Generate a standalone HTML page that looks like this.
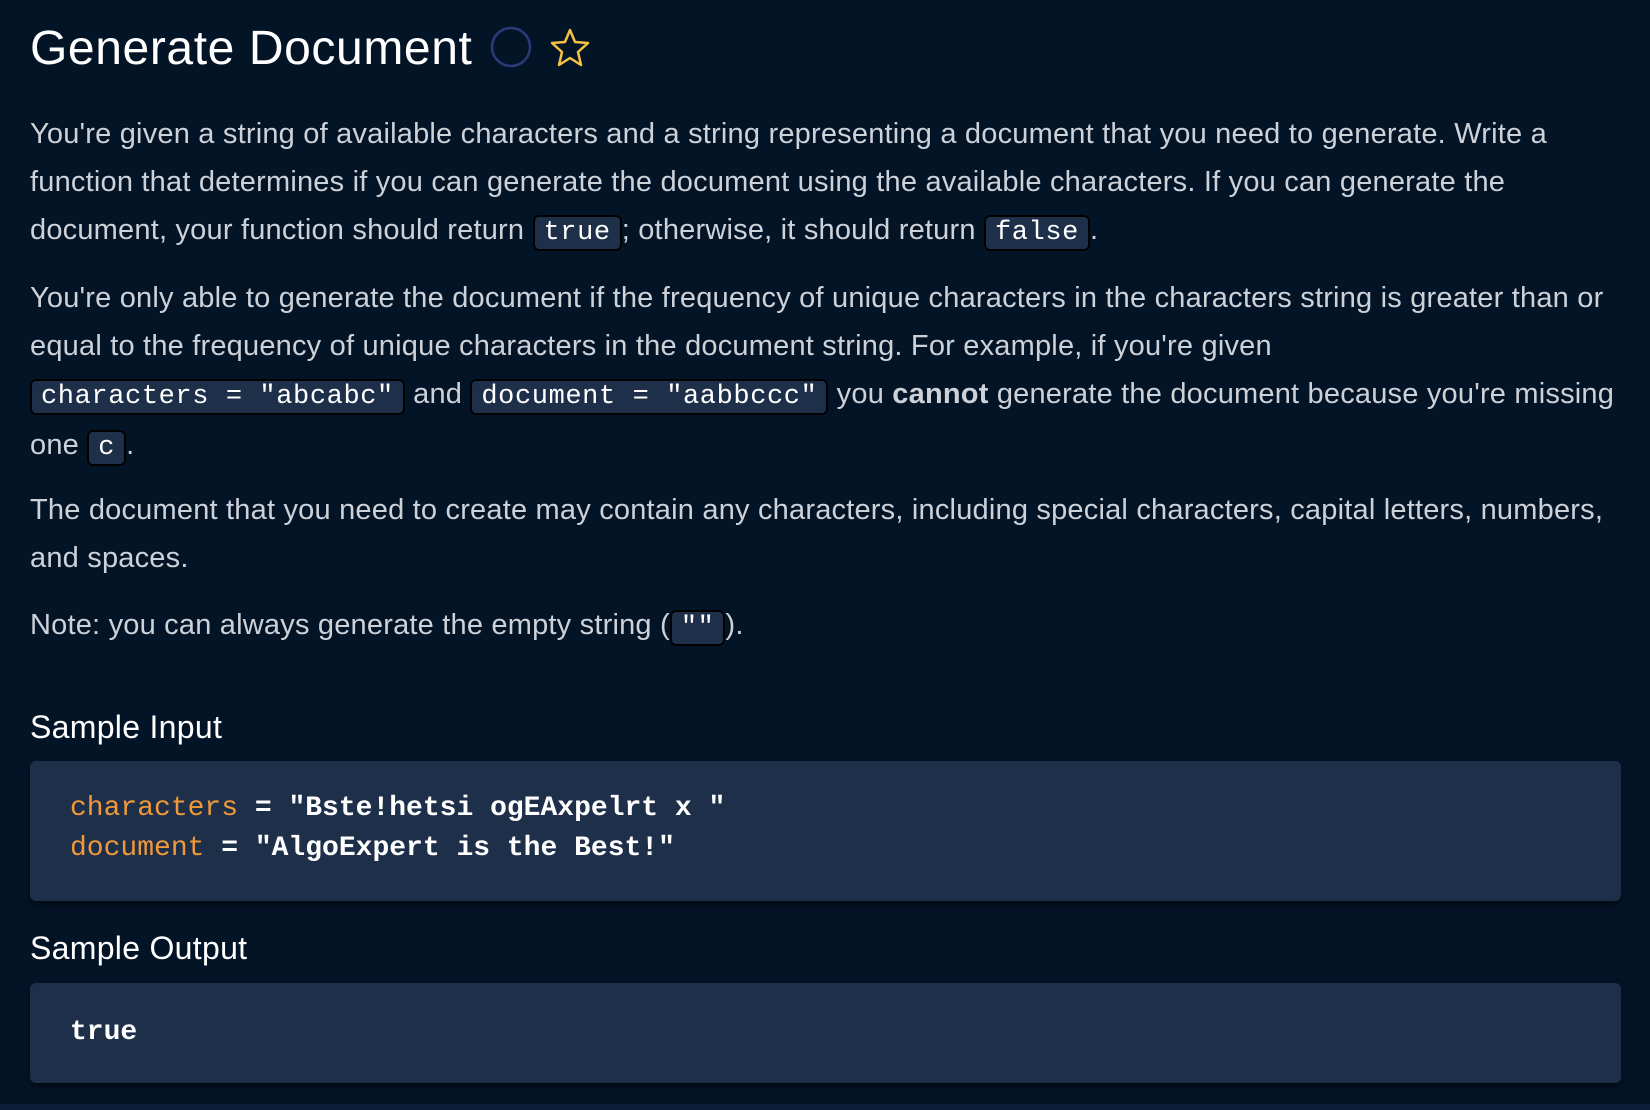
<!DOCTYPE html>
<html><head><meta charset="utf-8"><style>
html,body{margin:0;padding:0;background:#041427;width:1650px;height:1110px;overflow:hidden}
body{font-family:"Liberation Sans",sans-serif;color:#cdd1d8;position:relative}
h1{position:absolute;left:30px;top:18px;margin:0;font-size:48px;font-weight:normal;color:#fff;letter-spacing:0.6px;line-height:62px}
.icons{position:absolute;left:490px;top:26px}
p{margin:0;position:absolute;left:30px;width:1620px;font-size:29px;line-height:48px;letter-spacing:0.2px;white-space:nowrap}
code{font-family:"Liberation Mono",monospace;background:#1e2f4a;color:#fff;border:2px solid #000;border-radius:6px;padding:1px 9px;font-size:27px;letter-spacing:0.6px}
h3{position:absolute;left:30px;margin:0;font-size:32px;font-weight:normal;color:#fff;letter-spacing:0.3px}
.box{position:absolute;left:30px;width:1591px;background:#1e2f4a;border-radius:6px;box-shadow:0 4px 8px rgba(0,0,0,.5);font-family:"Liberation Mono",monospace;font-size:28px;color:#fff;font-weight:bold;letter-spacing:0}
.o{color:#f0993a;font-weight:normal}
</style></head><body>
<h1>Generate Document</h1>
<svg class="icons" width="110" height="46" viewBox="0 0 110 46"><circle cx="21" cy="21" r="19" fill="none" stroke="#2a3a7a" stroke-width="2.5"/><path d="M80 4 L85 16 L98 17 L88 26 L91 39 L80 32 L69 39 L72 26 L62 17 L75 16 Z" fill="none" stroke="#f5c242" stroke-width="2.5" stroke-linejoin="round"/></svg>
<p style="top:110px">You're given a string of available characters and a string representing a document that you need to generate. Write a<br>function that determines if you can generate the document using the available characters. If you can generate the<br>document, your function should return <code>true</code>; otherwise, it should return <code>false</code>.</p>
<p style="top:274px">You're only able to generate the document if the frequency of unique characters in the characters string is greater than or<br>equal to the frequency of unique characters in the document string. For example, if you're given<br><code>characters = "abcabc"</code> and <code>document = "aabbccc"</code> you <b>cannot</b> generate the document because you're missing<br>one <code>c</code>.</p>
<p style="top:486px">The document that you need to create may contain any characters, including special characters, capital letters, numbers,<br>and spaces.</p>
<p style="top:601px">Note: you can always generate the empty string (<code>""</code>).</p>
<h3 style="top:709px">Sample Input</h3>
<div class="box" style="top:761px;height:140px"><div style="position:absolute;left:40px;top:28px;line-height:40px"><span class="o">characters</span> = "Bste!hetsi ogEAxpelrt x "<br><span class="o">document</span> = "AlgoExpert is the Best!"</div></div>
<h3 style="top:930px">Sample Output</h3>
<div class="box" style="top:983px;height:100px"><div style="position:absolute;left:40px;top:30px;line-height:40px">true</div></div>
<div style="position:absolute;left:0;top:1104px;width:1650px;height:6px;background:#0b1e38"></div>
</body></html>
